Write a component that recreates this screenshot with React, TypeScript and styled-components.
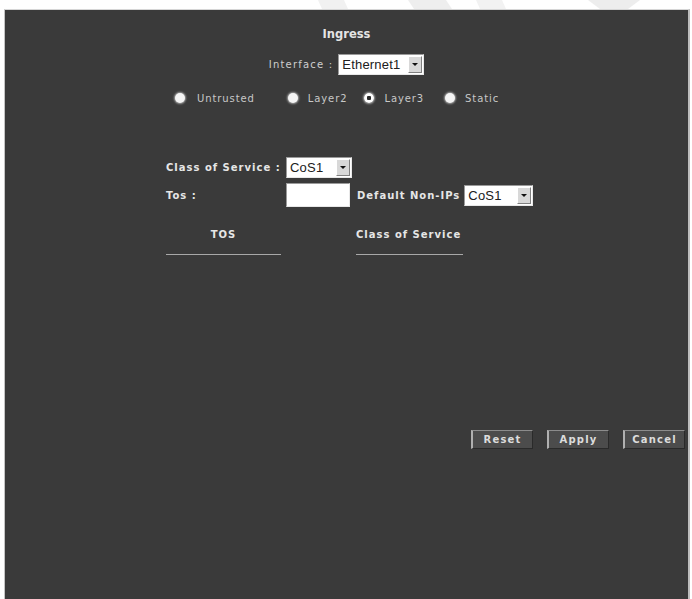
import styled, { createGlobalStyle } from "styled-components"

const GlobalStyle = createGlobalStyle`
    html, body {
        margin: 0;
        padding: 0;
        background: #ffffff;
    }
    body {
        font-family: "DejaVu Sans", "Liberation Sans", sans-serif;
    }
`

const Page = styled.div`
    width: 692px;
    height: 599px;
    overflow: hidden;
    display: flex;
    flex-direction: column;
`

// faint watermark strokes sitting in the white strip above the panel
const TopStrip = styled.svg`
    display: block;
    width: 692px;
    height: 9px;
    flex-shrink: 0;
`

const Panel = styled.div`
    flex: 1;
    margin: 0 2px 0 4px;
    background: #3a3a3a;
    border-top: 1px solid #d6d6d6;
    border-left: 1px solid #c4c4c4;
    border-right: 2px solid #bdbdbd;
    display: flex;
    flex-direction: column;
    color: #e6e6e6;
`

const Title = styled.div`
    margin-top: 16px;
    text-align: center;
    font-size: 11.5px;
    font-weight: bold;
    line-height: 16px;
    color: #e4e4e4;
`

const InterfaceRow = styled.div`
    margin-top: 12px;
    display: flex;
    align-items: center;
    justify-content: center;
    gap: 5px;
    font-size: 10px;
    letter-spacing: 1.2px;
    color: #cfcfcf;
`

const RadioRow = styled.div`
    margin-top: 17px;
    padding-left: 170px;
    display: flex;
    align-items: center;
    height: 12px;
`

const RadioItem = styled.label<{ gap: number }>`
    display: flex;
    align-items: center;
    margin-right: ${props => props.gap}px;
    font-size: 10px;
    color: #c8c8c8;
    letter-spacing: 0.9px;
`

const RadioDot = styled.span<{ checked?: boolean; space: number }>`
    width: 10px;
    height: 10px;
    border-radius: 50%;
    margin-right: ${props => props.space}px;
    box-sizing: border-box;
    background: ${props => props.checked
        ? "radial-gradient(circle, #2a2a2a 0 2px, #ffffff 2.5px)"
        : "#f4f4f4"};
    box-shadow: 0 0 2px 1px rgba(255, 255, 255, 0.55);
`

const SelectBox = styled.div<{ width: number }>`
    width: ${props => props.width}px;
    height: 21px;
    box-sizing: border-box;
    display: flex;
    align-items: stretch;
    background: #ffffff;
    border: 1px solid #9a9a9a;
    border-right-color: #e8e8e8;
    border-bottom-color: #e8e8e8;
    font-family: "Liberation Sans", Arial, sans-serif;
    font-size: 13px;
    letter-spacing: 0.2px;
    color: #202020;
`

const SelectValue = styled.span`
    flex: 1;
    display: flex;
    align-items: center;
    padding-left: 3px;
`

const ArrowButton = styled.span`
    width: 14px;
    margin: 1px;
    display: flex;
    align-items: center;
    justify-content: center;
    background: #d8d8d8;
    border: 1px solid #ffffff;
    border-right-color: #808080;
    border-bottom-color: #808080;
    box-sizing: border-box;
    &::after {
        content: "";
        border-left: 3px solid transparent;
        border-right: 3px solid transparent;
        border-top: 3px solid #111111;
    }
`

const FormGrid = styled.div`
    margin-top: 53px;
    padding-left: 161px;
    display: grid;
    grid-template-columns: 120px 66px auto auto;
    row-gap: 5px;
    align-items: center;
    justify-content: start;
`

const FieldLabel = styled.span<{ indent?: number }>`
    font-size: 10px;
    font-weight: bold;
    letter-spacing: 1px;
    color: #e6e6e6;
    white-space: nowrap;
    padding-left: ${props => props.indent ?? 0}px;
`

const SelectCell = styled.div`
    padding-left: 4px;
`

const TextInput = styled.div`
    width: 64px;
    height: 24px;
    box-sizing: border-box;
    background: #ffffff;
    border: 1px solid #9a9a9a;
    border-right-color: #e8e8e8;
    border-bottom-color: #e8e8e8;
`

const TableHead = styled.div`
    margin-top: 22px;
    padding-left: 161px;
    display: flex;
    gap: 75px;
`

const HeadCell = styled.div<{ width: number; align: string }>`
    width: ${props => props.width}px;
    text-align: ${props => props.align};
    font-size: 10px;
    font-weight: bold;
    letter-spacing: 1px;
    white-space: nowrap;
    color: #e6e6e6;
    line-height: 12px;
    padding-bottom: 13px;
    border-bottom: 1px solid #a8a8a8;
`

const ButtonBar = styled.div`
    margin-top: 175px;
    padding-right: 3px;
    display: flex;
    justify-content: flex-end;
    gap: 14px;
`

const ActionButton = styled.button`
    width: 62px;
    height: 19px;
    padding: 0;
    background: #4c4c4c;
    border: 1px solid #8c8c8c;
    border-left: 2px solid #b0b0b0;
    border-right-color: #2a2a2a;
    border-bottom-color: #2a2a2a;
    font-family: "DejaVu Sans", "Liberation Sans", sans-serif;
    font-size: 10px;
    font-weight: bold;
    letter-spacing: 1.2px;
    color: #dcdcdc;
`

const radios = [
    { label: "Untrusted", space: 12, gap: 33, checked: false },
    { label: "Layer2", space: 10, gap: 17, checked: false },
    { label: "Layer3", space: 10, gap: 21, checked: true },
    { label: "Static", space: 10, gap: 0, checked: false },
]

const Select = ({ value, width }: { value: string; width: number }) => (
    <SelectBox width={width}>
        <SelectValue>{value}</SelectValue>
        <ArrowButton />
    </SelectBox>
)

export default function App() {
    return (
        <Page>
            <GlobalStyle />
            <TopStrip viewBox="0 0 692 9">
                <polygon points="318,0 344,0 348,9 322,9" fill="#f1f1f1" />
                <polygon points="408,0 446,0 452,9 414,9" fill="#eeeeee" />
                <polygon points="476,0 502,0 506,9 480,9" fill="#f2f2f2" />
                <polygon points="588,0 640,0 628,9 600,9" fill="#ededed" />
            </TopStrip>
            <Panel>
                <Title>Ingress</Title>
                <InterfaceRow>
                    Interface :
                    <Select value="Ethernet1" width={86} />
                </InterfaceRow>
                <RadioRow>
                    {radios.map(r => (
                        <RadioItem key={r.label} gap={r.gap}>
                            <RadioDot checked={r.checked} space={r.space} />
                            {r.label}
                        </RadioItem>
                    ))}
                </RadioRow>
                <FormGrid>
                    <FieldLabel>Class of Service :</FieldLabel>
                    <Select value="CoS1" width={66} />
                    <span />
                    <span />
                    <FieldLabel>Tos :</FieldLabel>
                    <TextInput />
                    <FieldLabel indent={5}>Default Non-IPs</FieldLabel>
                    <SelectCell>
                        <Select value="CoS1" width={69} />
                    </SelectCell>
                </FormGrid>
                <TableHead>
                    <HeadCell width={115} align="center">TOS</HeadCell>
                    <HeadCell width={107} align="left">Class of Service</HeadCell>
                </TableHead>
                <ButtonBar>
                    <ActionButton>Reset</ActionButton>
                    <ActionButton>Apply</ActionButton>
                    <ActionButton>Cancel</ActionButton>
                </ButtonBar>
            </Panel>
        </Page>
    )
}
